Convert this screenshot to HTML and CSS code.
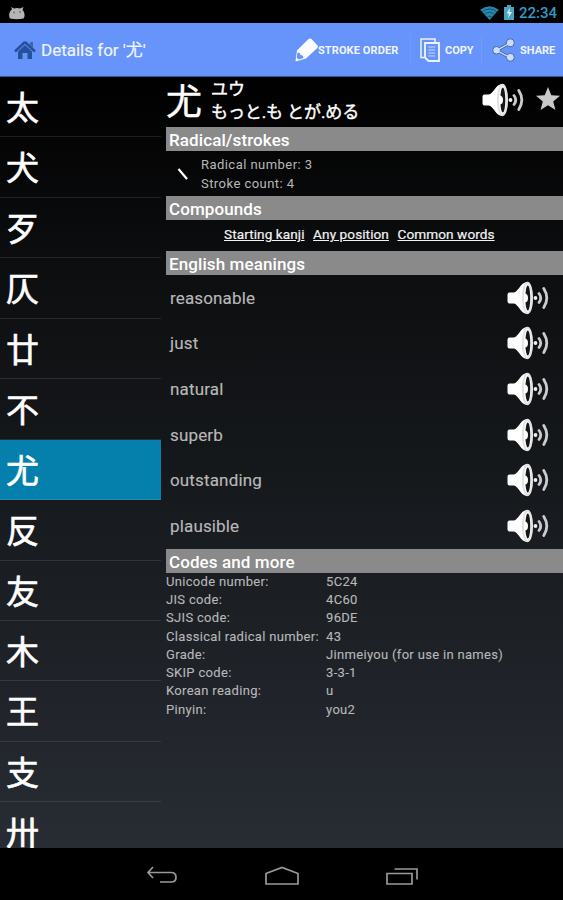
FILE: index.html
```html
<!DOCTYPE html>
<html lang="ja">
<head>
<meta charset="utf-8">
<title>Kanji details</title>
<link rel="stylesheet" href="styles.css">
</head>
<body>
<svg class="defs" aria-hidden="true">
  <symbol id="speaker" viewBox="0 0 44 36">
    <path d="M3.500 12.500Q1.500 12.500 1.500 14.500v7q0 2 2 2H8c5 1.500 6.500 9.500 12.500 10.500 7.500 0 7.500-32 0-32-6 1-7.500 9-12.500 10.500z" fill="#fff"/>
    <ellipse cx="21.800" cy="18" rx="2.500" ry="12.500" fill="#151515"/>
    <path d="M18.500 13.500q3.500 0 3.500 4.500t-3.500 4.500z" fill="#fff"/>
    <ellipse cx="21.500" cy="18" rx="4.600" ry="15.200" fill="none" stroke="#e2e2e2" stroke-width="2"/>
    <circle cx="29.500" cy="18" r="1.900" fill="#eee"/>
    <path d="M33 13.500q3.500 4.500 0 9M37.800 8.500q6 9.500 0 19" fill="none" stroke="#ccc" stroke-width="2.800" stroke-linecap="round"/>
  </symbol>
</svg>
<div class="screen">
  <div class="status">
    <svg class="droid" viewBox="0 0 18 14"><path d="M2 12.500C0 9 2 4 4 3.500L3 1l3 1.500q3-1 6 0L15.500 1 14.500 4c2 2 3 6 1 8.500q-7 1.500-13.500 0z" fill="#b5b5b5"/><path d="M5 6.500h2M11 6h2" stroke="#777" stroke-width="1.300"/></svg>
    <svg class="wifi" viewBox="0 0 20 15"><path d="M0 4Q10-3.500 20 4L10 15z" fill="#2489ad"/><path d="M2 6.200q8-6 16 0M4.500 9q5.500-4.500 11 0M7 12q3-2.500 6 0" fill="none" stroke="#0d4359" stroke-width=".8"/></svg>
    <svg class="battery" viewBox="0 0 10 15"><path d="M3 0h4v2h3v13H0V2h3z" fill="#4aa4c2"/><path d="M6 3 2.500 8.500H5L4 13l4-6H5.500z" fill="#e8f8ff"/></svg>
    <span class="clock">22:34</span>
  </div>
  <header class="bar">
    <svg class="home" viewBox="0 0 22 20"><path d="M11 2 1 11.500M11 2l10 9.500" stroke="#24519c" stroke-width="2.600" fill="none"/><path d="M16 2h3v6l-3-3z" fill="#3c66ac"/><path d="M4 11.500 11 5l7 6.500V19h-4.500v-6h-5v6H4z" fill="#24519c"/></svg>
    <h1 class="title">Details for '尤'</h1>
    <div class="action stroke-order">
      <svg class="i-pencil" viewBox="0 0 23 24"><path d="M2 12.500 13.500 1q1.500-1 3 0l6 6.500q.8 1-.2 2.500L11 20.500.500 23.500z" fill="#fff"/><path d="M2.500 14.500q3-.5 3 2.500 3 0 3 3L4 21.500 1.800 20z" fill="#6694fa"/></svg>
      <span>STROKE ORDER</span>
    </div>
    <div class="action copy">
      <svg class="i-copy" viewBox="0 0 20 24"><g fill="none" stroke="#eef4ff" stroke-width="1.500"><path d="M4 19.500H1V1h14v3.500"/><path d="M5 5h14v18H8.500L5 19.500z" stroke-width="1.900"/><path d="M8.500 9h6.500M8.500 12h6.500M8.500 15h6.500M8.500 18h6.500" stroke="#a9c4ff" stroke-width="1.300"/></g></svg>
      <span>COPY</span>
    </div>
    <div class="action share">
      <svg class="i-share" viewBox="0 0 24 24"><path d="M18 5 4.500 12.500 18 19.500" fill="none" stroke="#49699f" stroke-width="3"/><g fill="#cbdcff" stroke="#49699f"><circle cx="18.300" cy="4.800" r="4"/><circle cx="4.500" cy="12.300" r="3.800"/><circle cx="18.300" cy="19.300" r="4"/></g><path d="M18 5 4.500 12.500 18 19.500" fill="none" stroke="#cbdcff" stroke-width="1.400"/></svg>
      <span>SHARE</span>
    </div>
  </header>
  <main class="content">
    <ul class="kanji-list">
      <li>太</li><li>犬</li><li>歹</li><li>仄</li><li>廿</li><li>不</li><li class="selected">尤</li><li>反</li><li>友</li><li>木</li><li>王</li><li>支</li><li>卅</li>
    </ul>
    <section class="detail">
      <div class="entry">
        <span class="glyph">尤</span>
        <div class="readings"><p>ユウ</p><p>もっと.も とが.める</p></div>
        <svg class="speaker"><use href="#speaker"/></svg>
        <svg class="star" viewBox="0 0 24 24"><path d="m12 0 3.300 8.300 8.700.5-6.800 5.700L19.500 23 12 18.200 4.500 23l2.300-8.500L0 8.800l8.700-.5z" fill="#c9c9c9"/></svg>
      </div>
      <h2>Radical/strokes</h2>
      <div class="radical">
        <svg class="dot-stroke" viewBox="0 0 12 14"><path d="m1.500 2 8.500 10" stroke="#fff" stroke-width="2.200"/></svg>
        <div><p>Radical number: 3</p><p>Stroke count: 4</p></div>
      </div>
      <h2>Compounds</h2>
      <nav class="links"><a>Starting kanji</a><a>Any position</a><a>Common words</a></nav>
      <h2>English meanings</h2>
      <ul class="meanings">
        <li><span>reasonable</span><svg class="speaker"><use href="#speaker"/></svg></li>
        <li><span>just</span><svg class="speaker"><use href="#speaker"/></svg></li>
        <li><span>natural</span><svg class="speaker"><use href="#speaker"/></svg></li>
        <li><span>superb</span><svg class="speaker"><use href="#speaker"/></svg></li>
        <li><span>outstanding</span><svg class="speaker"><use href="#speaker"/></svg></li>
        <li><span>plausible</span><svg class="speaker"><use href="#speaker"/></svg></li>
      </ul>
      <h2>Codes and more</h2>
      <dl class="codes">
        <dt>Unicode number:</dt><dd>5C24</dd>
        <dt>JIS code:</dt><dd>4C60</dd>
        <dt>SJIS code:</dt><dd>96DE</dd>
        <dt>Classical radical number:</dt><dd>43</dd>
        <dt>Grade:</dt><dd>Jinmeiyou (for use in names)</dd>
        <dt>SKIP code:</dt><dd>3-3-1</dd>
        <dt>Korean reading:</dt><dd>u</dd>
        <dt>Pinyin:</dt><dd>you2</dd>
      </dl>
    </section>
  </main>
  <footer class="navbar">
    <svg viewBox="0 0 32 20"><path d="M7 1 2 6.500 7 12M2 6.500h23q5 0 5 4.700t-5 4.800H14" /></svg>
    <svg class="nav-home" viewBox="0 0 36 20"><path d="M2 7.500 18 1.500l16 6V18H2z"/></svg>
    <svg viewBox="0 0 32 20"><path d="M1 7.500h25V18H1zM8.500 3H31v10.500"/></svg>
  </footer>
</div>
</body>
</html>
```
FILE: styles.css
```css
* { box-sizing: border-box; }
body, h1, h2, p, ul, dl, dd { margin: 0; padding: 0; }
body {
  background: #000;
  color: #b8b8b8;
  font-family: Roboto, "Noto Sans CJK JP", sans-serif;
  overflow: hidden;
}
ul { list-style: none; }
svg { display: block; flex: none; }
.defs { position: absolute; width: 0; height: 0; }

.screen { width: 563px; height: 900px; display: flex; flex-direction: column; }

.status { height: 23px; display: flex; align-items: center; padding: 2px 6px 0 8px; }
.droid { width: 18px; height: 14px; margin-right: auto; }
.wifi { width: 19px; height: 14px; margin-right: 5px; }
.battery { width: 10px; height: 15px; margin-right: 5px; }
.clock { width: 38px; font-size: 15px; line-height: 20px; font-weight: 500; color: #2e9cc6; }

.bar {
  height: 54px;
  display: flex;
  align-items: center;
  padding-left: 14px;
  background: #6694fa;
  border-bottom: 1px solid #345694;
  color: #f0f5ff;
}
.home { width: 22px; height: 20px; margin-right: 5px; }
.title { width: 254px; font-size: 17px; font-weight: 400; line-height: 20px; padding-top: 1px; white-space: nowrap; -webkit-text-stroke: 0.2px; }
.action { display: flex; align-items: center; height: 30px; padding-top: 1px; font-size: 11px; font-weight: 700; white-space: nowrap; }
.stroke-order { width: 115px; letter-spacing: 0.1px; }
.copy { width: 71px; padding-left: 9px; border-left: 1px solid #6f9bfb; }
.share { border-left: 1px solid #6f9bfb; padding-left: 10px; }
.i-pencil { width: 23px; height: 24px; }
.i-copy { width: 20px; height: 24px; margin-right: 5px; }
.i-share { width: 24px; height: 24px; margin-right: 4px; }

.content {
  height: 771px;
  flex: none;
  display: flex;
  overflow: hidden;
  background: linear-gradient(#000, #0d0e10 25%, #15181b 50%, #20242a 80%, #282c33);
}
.kanji-list { width: 161px; }
.kanji-list li {
  height: 60.45px;
  padding: 3px 0 0 6px;
  border-bottom: 1px solid rgba(255, 255, 255, 0.1);
  color: #fff;
  font-size: 33px;
  line-height: 57px;
  -webkit-text-stroke: 0.6px #fff;
}
.kanji-list .selected { background: #057fab; }

.detail { width: 397px; margin-left: 5px; }
.entry { height: 50px; display: flex; }
.glyph { width: 45px; padding-top: 2px; font-size: 36px; line-height: 48px; color: #fff; -webkit-text-stroke: 0.5px #fff; }
.readings { width: 270px; padding-top: 1px; color: #fff; font-size: 17px; line-height: 23px; white-space: nowrap; letter-spacing: -0.1px; -webkit-text-stroke: 0.4px #fff; }
.speaker { width: 44px; height: 36px; }
.entry .speaker { margin-top: 5px; }
.star { width: 24px; height: 24px; margin: 10px 0 0 11px; }
h2 {
  height: 24px;
  padding-left: 3px;
  background: #8a8a8a;
  color: #fff;
  font-size: 17px;
  font-weight: 500;
  line-height: 26px;
  letter-spacing: 0.1px;
}
.radical { height: 45px; display: flex; font-size: 13px; letter-spacing: 0.45px; line-height: 19px; padding-top: 4px; }
.dot-stroke { width: 12px; height: 14px; margin: 12px 12px 0 11px; }
.links { height: 31px; display: flex; gap: 8.500px; padding-left: 58px; font-size: 13.600px; line-height: 29px; color: #f2f2f2; white-space: nowrap; -webkit-text-stroke: 0.2px; }
.links a { text-decoration: underline; letter-spacing: 0.08px; }
.meanings li { height: 45.65px; display: flex; justify-content: space-between; align-items: center; padding: 0 13px 0 4px; font-size: 17px; letter-spacing: 0.15px; -webkit-text-stroke: 0.15px; }
.codes { display: grid; grid-template-columns: 160px 1fr; grid-auto-rows: 18.25px; font-size: 13px; letter-spacing: 0.32px; line-height: 18px; white-space: nowrap; -webkit-text-stroke: 0.1px; }

.navbar { height: 52px; display: flex; justify-content: center; align-items: center; gap: 86px; padding-top: 4px; }
.navbar svg { width: 32px; height: 20px; fill: none; stroke: #999; stroke-width: 1.700; }
.navbar .nav-home { width: 36px; }
```
